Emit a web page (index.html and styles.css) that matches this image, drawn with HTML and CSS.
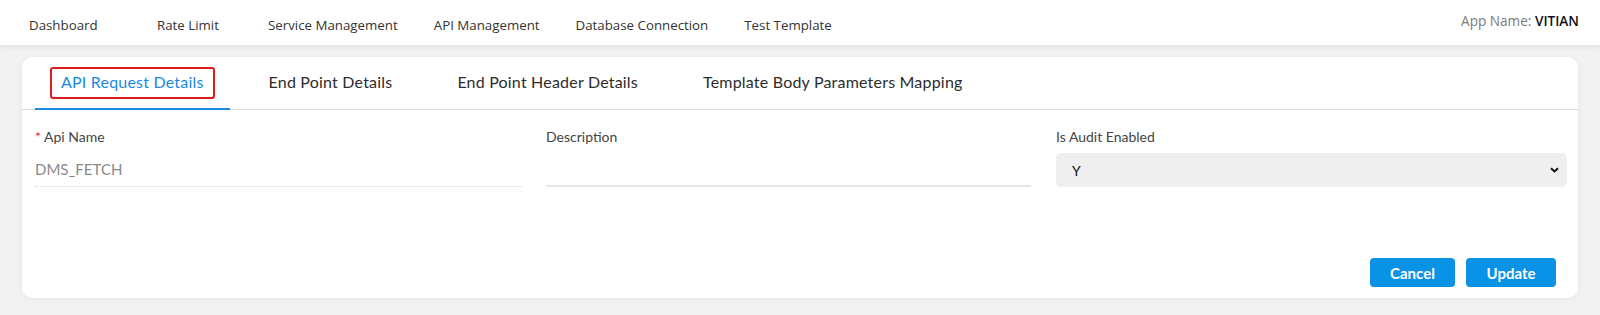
FILE: index.html
```html
<!DOCTYPE html>
<html lang="en">
<head>
<meta charset="utf-8">
<title>API Management</title>
<link rel="stylesheet" href="styles.css">
</head>
<body>
<header class="topbar">
  <nav class="nav">
    <a class="nav-item nav-dashboard">Dashboard</a>
    <a class="nav-item nav-rate">Rate Limit</a>
    <a class="nav-item">Service Management</a>
    <a class="nav-item">API Management</a>
    <a class="nav-item">Database Connection</a>
    <a class="nav-item">Test Template</a>
  </nav>
  <div class="app-name">App Name: <span class="app-value">VITIAN</span></div>
</header>
<main class="content">
  <section class="card">
    <div class="tabs">
      <div class="tab active"><span class="tab-label focused">API Request Details</span></div>
      <div class="tab"><span class="tab-label">End Point Details</span></div>
      <div class="tab"><span class="tab-label">End Point Header Details</span></div>
      <div class="tab"><span class="tab-label">Template Body Parameters Mapping</span></div>
    </div>
    <form class="form">
      <div class="fields">
        <div class="field">
          <label class="label"><span class="req">*</span> Api Name</label>
          <div class="input input-disabled">DMS_FETCH</div>
        </div>
        <div class="field">
          <label class="label">Description</label>
          <div class="input input-line"></div>
        </div>
        <div class="field">
          <label class="label">Is Audit Enabled</label>
          <div class="select">
            <span>Y</span>
            <svg class="chev" width="9" height="6" viewBox="0 0 9 6"><path d="M1 1.2 L4.5 4.5 L8 1.2" fill="none" stroke="#111" stroke-width="1.9"/></svg>
          </div>
        </div>
      </div>
      <div class="actions">
        <button type="button" class="btn">Cancel</button>
        <button type="button" class="btn">Update</button>
      </div>
    </form>
  </section>
</main>
</body>
</html>
```
FILE: styles.css
```css
* { box-sizing: border-box; }
html, body { margin: 0; padding: 0; }
body {
  background: #f2f2f2;
  font-family: Lato, "Noto Sans", sans-serif;
  color: #333;
  width: 1600px;
  height: 315px;
  overflow: hidden;
}
.topbar {
  height: 45px;
  background: #fff;
  display: flex;
  align-items: center;
  justify-content: space-between;
  padding: 0 21px 0 29px;
  box-shadow: 0 2px 6px rgba(0,0,0,0.08);
  position: relative;
}
.nav {
  display: flex;
  gap: 36px;
  padding-top: 4px;
}
.nav-item {
  font-family: "Open Sans", sans-serif;
  font-size: 13.3px;
  color: #333;
  text-decoration: none;
  white-space: nowrap;
}
.nav-dashboard { min-width: 92px; }
.nav-rate { min-width: 75px; }
.app-name {
  font-family: "Open Sans", sans-serif;
  font-size: 13.6px;
  color: #7a7a7a;
  padding-bottom: 5px;
}
.app-value { color: #111; font-weight: 600; }

.content {
  padding: 12px 22px 0 22px;
}
.card {
  background: #fff;
  border-radius: 10px;
  box-shadow: 0 1px 6px rgba(0,0,0,0.06);
  height: 241px;
  display: flex;
  flex-direction: column;
}
.tabs {
  display: flex;
  gap: 13px;
  height: 53px;
  padding-left: 13px;
  border-bottom: 1px solid #dcdcdc;
}
.tab {
  display: flex;
  align-items: flex-start;
  padding: 10px 15px 0;
  border-bottom: 2px solid transparent;
  margin-bottom: -1px;
  font-size: 16px;
  letter-spacing: 0.2px;
  color: #2c2c2c;
}
.tab.active {
  border-bottom-color: #1a8ae0;
  color: #1a8ae0;
}
.tab-label {
  display: inline-block;
  padding: 5px 9px 7px;
  border: 2px solid transparent;
  border-radius: 3px;
  line-height: 16px;
}
.tab-label.focused { border-color: #e01b1b; }

.form {
  flex: 1;
  display: flex;
  flex-direction: column;
  padding: 17px 11px 11px 13px;
}
.fields {
  display: grid;
  grid-template-columns: 511px 510px 511px;
}
.field {
  display: flex;
  flex-direction: column;
}
.label {
  font-size: 14px;
  line-height: 20px;
  color: #444;
  margin-bottom: 6px;
}
.req { color: #f5222d; }
.input {
  height: 34px;
  margin-right: 25px;
  display: flex;
  align-items: center;
  font-size: 15px;
}
.input-disabled {
  color: #8a8a8a;
  border-bottom: 1px dotted #d8d8d8;
  padding-bottom: 2px;
}
.input-line {
  border-bottom: 2px solid #e6e6e6;
}
.select {
  height: 34px;
  background: #efefef;
  border-radius: 5px;
  display: flex;
  align-items: center;
  justify-content: space-between;
  padding: 0 8px 0 16px;
  font-size: 14px;
  color: #111;
}
.actions {
  margin-top: auto;
  display: flex;
  justify-content: flex-end;
  gap: 11px;
  padding-right: 11px;
}
.btn {
  font-family: Lato, sans-serif;
  font-size: 15px;
  font-weight: 700;
  color: #fff;
  background: #0a93e6;
  border: none;
  border-radius: 4px;
  height: 29px;
  padding: 0;
  width: 85px;
}
.btn + .btn { width: 90px; }
```
